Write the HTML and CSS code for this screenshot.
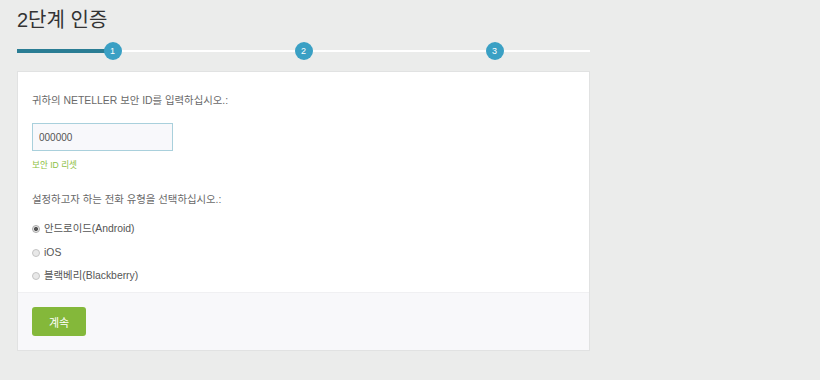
FILE: index.html
```html
<!DOCTYPE html>
<html lang="ko">
<head>
<meta charset="utf-8">
<link rel="stylesheet" href="styles.css">
</head>
<body>
<div class="page">
  <h1 class="title">2단계 인증</h1>
  <div class="steps">
    <div class="step done"><span class="dot">1</span></div>
    <div class="step"><span class="dot">2</span></div>
    <div class="step"><span class="dot">3</span></div>
  </div>
  <div class="card">
    <div class="card-body">
      <p class="label">귀하의 NETELLER 보안 ID를 입력하십시오.:</p>
      <input class="field" type="text" value="000000">
      <a class="reset">보안 ID 리셋</a>
      <p class="label label-2">설정하고자 하는 전화 유형을 선택하십시오.:</p>
      <div class="options">
        <label class="option"><span class="radio checked"></span>안드로이드(Android)</label>
        <label class="option"><span class="radio"></span>iOS</label>
        <label class="option"><span class="radio"></span>블랙베리(Blackberry)</label>
      </div>
    </div>
    <div class="card-foot">
      <button class="btn">계속</button>
    </div>
  </div>
</div>
</body>
</html>
```

FILE: styles.css
```css
html, body {
  margin: 0;
  padding: 0;
  background: #ebeceb;
}
body {
  font-family: "Liberation Sans", Arial, "Noto Sans CJK KR", sans-serif;
  color: #555;
}
.page {
  width: 573px;
  padding: 8px 0 0 17px;
}
.title {
  margin: 0;
  font-family: "Liberation Sans", Arial, "Noto Sans CJK KR", sans-serif;
  font-weight: normal;
  font-size: 20px;
  line-height: 24px;
  color: #333;
}
.steps {
  position: relative;
  display: grid;
  grid-template-columns: repeat(3, 1fr);
  height: 18px;
  margin-top: 10px;
}
.steps::before {
  content: "";
  position: absolute;
  left: 0;
  right: 0;
  top: 8px;
  height: 2px;
  background: #fff;
}
.step {
  position: relative;
  display: flex;
  justify-content: center;
}
.step.done::before {
  content: "";
  position: absolute;
  left: 0;
  right: 50%;
  top: 7px;
  height: 4px;
  background: #2a7d94;
}
.dot {
  position: relative;
  width: 18px;
  height: 18px;
  border-radius: 50%;
  background: #3aa0c4;
  color: #fff;
  font-size: 9px;
  line-height: 18px;
  text-align: center;
  font-family: "Liberation Sans", Arial, sans-serif;
}
.card {
  margin-top: 11px;
  background: #fff;
  border: 1px solid #e1e2e2;
}
.card-body {
  padding: 21px 14px 8px;
  display: flex;
  flex-direction: column;
  align-items: flex-start;
}
.label {
  margin: 0;
  font-size: 10.4px;
  line-height: 16px;
  color: #6a6a6a;
}
.field {
  margin-top: 14px;
  box-sizing: border-box;
  width: 141px;
  height: 28px;
  padding: 0 6px;
  border: 1px solid #a9d0dc;
  background: #f8f8fb;
  font-family: "Liberation Sans", Arial, sans-serif;
  font-size: 10px;
  color: #555;
  outline: none;
}
.reset {
  margin-top: 8px;
  font-size: 8.6px;
  line-height: 12px;
  color: #8cc043;
}
.label-2 {
  margin-top: 21px;
}
.options {
  margin-top: 13px;
  display: flex;
  flex-direction: column;
  gap: 7.5px;
}
.option {
  display: flex;
  align-items: center;
  font-size: 10.4px;
  line-height: 16px;
  color: #555;
}
.radio {
  box-sizing: border-box;
  width: 8px;
  height: 8px;
  margin-right: 4px;
  border-radius: 50%;
  border: 1px solid #c4c4c4;
  background: #e8e8e8;
}
.radio.checked {
  background: radial-gradient(circle, #555 0 1.8px, #e8e8e8 2.3px);
  border-color: #aaa;
}
.card-foot {
  background: #f8f8fa;
  border-top: 1px solid #f0f0f2;
  padding: 14px 14px 14px;
}
.btn {
  display: block;
  width: 54px;
  height: 29px;
  border: 0;
  border-radius: 3px;
  background: #84b83a;
  color: #fff;
  font-family: "Noto Sans CJK KR", sans-serif;
  font-size: 11px;
  padding: 0;
}
```
